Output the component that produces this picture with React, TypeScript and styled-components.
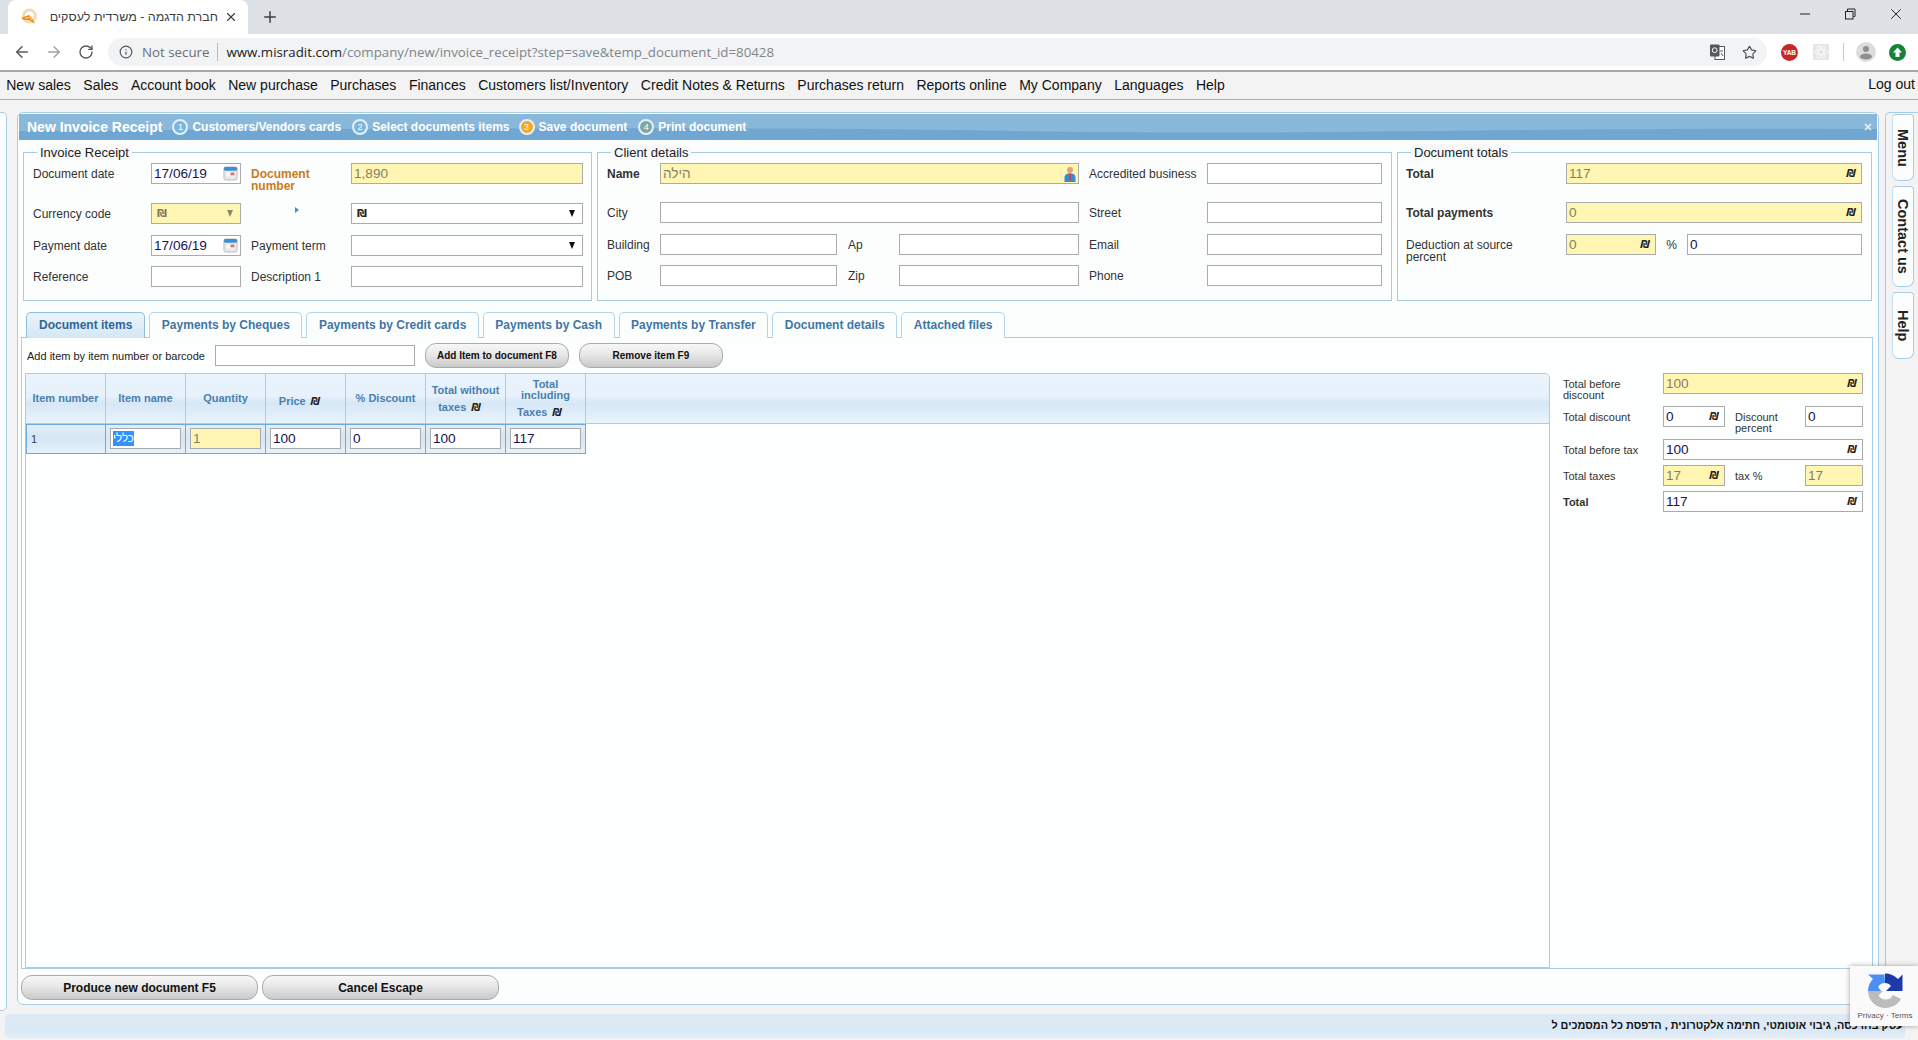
import { ReactNode } from 'react'
import { ArrowLeft, ArrowRight, Info, Minus, Plus, RotateCw, Star, X } from 'lucide-react'
import styled, { createGlobalStyle } from 'styled-components'

const GlobalStyle = createGlobalStyle`
  html, body {
    margin: 0;
    padding: 0;
    width: 1918px;
    height: 1040px;
    overflow: hidden;
    background: #f3f3f3;
    font-family: "Liberation Sans", Arial, sans-serif;
  }
  * {
    box-sizing: border-box;
  }
`

const Page = styled.div`
  position: relative;
  display: flex;
  flex-direction: column;
  width: 1918px;
  height: 1040px;
  overflow: hidden;
`

/* browser chrome */

const TabStrip = styled.div`
  display: flex;
  align-items: flex-end;
  height: 34px;
  padding-left: 8px;
  background: #dee1e6;
`

const BrowserTab = styled.div`
  display: flex;
  align-items: center;
  width: 240px;
  height: 34px;
  padding: 0 10px 0 12px;
  background: #fff;
  border-radius: 8px 8px 0 0;
`

const TabTitle = styled.span`
  flex: 1;
  margin-left: 8px;
  direction: rtl;
  white-space: nowrap;
  font-size: 12.5px;
  color: #3c4043;
`

const NewTab = styled.div`
  display: flex;
  margin-left: 13px;
  align-self: center;
  color: #3c4043;
`

const WindowButtons = styled.div`
  display: flex;
  align-items: center;
  gap: 30px;
  align-self: flex-start;
  height: 28px;
  margin-left: auto;
  padding-right: 13px;
  color: #222;
`

const Toolbar = styled.div`
  display: flex;
  align-items: center;
  height: 36px;
  padding-left: 13px;
  background: #fff;
`

const NavButton = styled.div<{ $faded?: boolean }>`
  display: flex;
  justify-content: center;
  width: 18px;
  margin-right: 14px;
  color: ${({ $faded }) => ($faded ? '#a0a3a8' : '#55585c')};
`

const AddressBar = styled.div`
  display: flex;
  align-items: center;
  flex: none;
  width: 1659px;
  height: 28px;
  margin-left: -1px;
  padding: 0 10px 0 11px;
  border-radius: 14px;
  background: #f1f3f4;
  font-family: "Open Sans", sans-serif;
  font-size: 13.3px;
  color: #80868b;
`

const NotSecure = styled.span`
  margin-left: 9px;
  padding-right: 8px;
  border-right: 1px solid #b8bcc0;
  line-height: 18px;
  color: #6b6f74;
`

const Url = styled.span`
  margin-left: 8px;
  b {
    font-weight: 400;
    color: #202124;
  }
`

const AddressIcons = styled.div`
  display: flex;
  align-items: center;
  gap: 17px;
  margin-left: auto;
  color: #55585c;
`

const ExtensionRow = styled.div`
  display: flex;
  align-items: center;
  flex: none;
  margin-left: 12px;
`

const ExtensionSlot = styled.div<{ $width: number }>`
  display: flex;
  justify-content: center;
  width: ${({ $width }) => $width}px;
`

const ExtensionDivider = styled.div`
  width: 1px;
  height: 18px;
  margin-right: 12px;
  background: #c8cacd;
`

/* site menu */

const MenuBar = styled.nav`
  display: flex;
  align-items: center;
  height: 30px;
  padding: 0 3px 2px 0;
  border-top: 2px solid #a8a8a8;
  border-bottom: 1px solid #ababab;
  background: #f3f3f3;
  font-size: 14px;
  color: #111;
`

const MenuItem = styled.a<{ $end?: boolean }>`
  padding: 0 6.25px;
  ${({ $end }) => $end && 'margin: 0 0 2px auto; padding: 0;'}
`

/* workspace */

const Workspace = styled.div`
  display: flex;
  align-items: flex-start;
  flex: 1;
  padding-top: 12px;
`

const LeftSliver = styled.div`
  width: 7px;
  height: 899px;
  border: 1px solid #a9cde6;
  border-left: 0;
  border-radius: 0 5px 5px 0;
  background: #fcfdfe;
`

const MainPanel = styled.main`
  display: flex;
  flex-direction: column;
  width: 1862px;
  height: 893px;
  margin-left: 10px;
  padding: 1px;
  border: 1px solid #a9cde6;
  border-radius: 6px;
  background: #fcfefe;
`

const TitleBar = styled.header`
  position: relative;
  display: flex;
  align-items: center;
  flex: none;
  height: 26px;
  padding: 0 4px 0 8px;
  overflow: hidden;
  background: #6fa6d2;
  color: #fff;
`

const TitleWave = styled.svg`
  position: absolute;
  inset: 0;
  width: 100%;
  height: 100%;
`

const TitleText = styled.h1`
  position: relative;
  margin: 0 10px 0 0;
  font-size: 14px;
  font-weight: 700;
  white-space: nowrap;
`

const Step = styled.div<{ $after: number }>`
  position: relative;
  display: flex;
  align-items: center;
  gap: 4px;
  margin-right: ${({ $after }) => $after}px;
  font-size: 12px;
  font-weight: 700;
  white-space: nowrap;
`

const StepDot = styled.span<{ $state: 'open' | 'current' | 'next' }>`
  display: flex;
  align-items: center;
  justify-content: center;
  width: 16px;
  height: 16px;
  border: 2px solid #e4f0f7;
  border-radius: 50%;
  font-size: 9px;
  font-weight: 400;
  color: #fff;
  background: ${({ $state }) =>
    $state === 'current' ? '#f5a623' : $state === 'next' ? '#7fa8a0' : '#7db4dd'};
`

const TitleClose = styled.span`
  position: relative;
  display: flex;
  margin-left: auto;
  color: #e8f2f9;
`

const SectionRow = styled.div`
  display: grid;
  grid-template-columns: 569px 795px 475px;
  gap: 5px;
  margin: 4px 0 0 4px;
`

const Section = styled.fieldset`
  height: 157px;
  margin: 0;
  padding: 0;
  border: 1px solid #a5cbe6;
  min-width: 0;
`

const SectionLegend = styled.legend`
  height: 16px;
  margin-left: 13px;
  padding: 0 3px;
  line-height: 18px;
  border-radius: 6px;
  background: #f8f9fa;
  font-size: 13px;
  color: #222;
`

const FormGrid = styled.div<{ $columns: string; $rows: string; $inset?: number }>`
  display: grid;
  grid-template-columns: ${({ $columns }) => $columns};
  grid-template-rows: ${({ $rows }) => $rows};
  padding: 3px 0 0 ${({ $inset }) => $inset ?? 9}px;
`

const Label = styled.label<{ $bold?: boolean; $accent?: boolean; $inset?: number; $maxWidth?: number }>`
  padding-top: 5px;
  padding-left: ${({ $inset }) => $inset ?? 0}px;
  max-width: ${({ $maxWidth }) => ($maxWidth ? `${$maxWidth}px` : 'none')};
  font-size: 12px;
  line-height: 12px;
  font-weight: ${({ $bold, $accent }) => ($bold || $accent ? 700 : 400)};
  color: ${({ $accent }) => ($accent ? '#cc7a20' : '#333')};
`

const Field = styled.div<{ $yellow?: boolean; $span?: number; $center?: boolean }>`
  display: flex;
  align-items: center;
  height: 21px;
  padding: 0 5px 0 2px;
  border: 1px solid #ababab;
  background: ${({ $yellow }) => ($yellow ? '#fff6b4' : '#fff')};
  color: ${({ $yellow }) => ($yellow ? '#857f68' : '#14145a')};
  ${({ $span }) => $span && `grid-column: span ${$span};`}
`

const FieldInput = styled.input`
  flex: 1;
  min-width: 0;
  padding: 0;
  border: 0;
  outline: 0;
  background: transparent;
  font-family: "Liberation Sans", Arial, sans-serif;
  font-size: 13.6px;
  color: inherit;
`

const FieldIcon = styled.span`
  display: flex;
  flex: none;
  margin-right: -3px;
`

const Shekel = styled.span<{ $plain?: boolean; $muted?: boolean }>`
  flex: none;
  font-family: "DejaVu Sans", sans-serif;
  font-size: 11px;
  font-weight: 700;
  font-style: ${({ $plain }) => ($plain ? 'normal' : 'italic')};
  margin-left: ${({ $plain }) => ($plain ? '3px' : '0')};
  color: ${({ $muted }) => ($muted ? '#7d7a68' : '#222')};
`

const HeadShekel = styled(Shekel)`
  margin: 0 12px 0 2px;
`

const Caret = styled.span<{ $muted?: boolean }>`
  flex: none;
  width: 0;
  height: 0;
  margin: 0 2px 0 auto;
  border-left: 3.5px solid transparent;
  border-right: 3.5px solid transparent;
  border-top: 7px solid ${({ $muted }) => ($muted ? '#8a8470' : '#111')};
`

const Pointer = styled.span`
  justify-self: center;
  align-self: start;
  width: 0;
  height: 0;
  margin: 4px 0 0 -8px;
  border-top: 3.5px solid transparent;
  border-bottom: 3.5px solid transparent;
  border-left: 4px solid #3f8fd6;
`

const PercentSign = styled.span`
  padding-top: 5px;
  text-align: center;
  font-size: 12px;
  line-height: 12px;
  color: #333;
`

/* tabs */

const TabRow = styled.div`
  display: flex;
  gap: 4px;
  height: 26px;
  margin: 11px 0 -1px 7px;
`

const PageTab = styled.div<{ $active?: boolean }>`
  position: relative;
  display: flex;
  align-items: center;
  padding: 0 11.5px 2px;
  border: 1px solid #b5d3ea;
  border-bottom: 0;
  border-radius: 5px 5px 0 0;
  font-size: 12px;
  font-weight: 700;
  white-space: nowrap;
  color: ${({ $active }) => ($active ? '#2f6796' : '#3f76a5')};
  background: ${({ $active }) => ($active ? 'linear-gradient(#eaf4fc, #d4e6f5)' : '#fcfefe')};
  ${({ $active }) => $active && 'border-color: #8fbde0; z-index: 1; padding: 0 12px 2px;'}
`

const TabPanel = styled.section`
  display: flex;
  flex: none;
  height: 632px;
  margin: 0 4px 0 2px;
  border: 1px solid #a9cde6;
  background: #fdfefe;
`

const ItemsColumn = styled.div`
  display: flex;
  flex-direction: column;
  width: 1528px;
  padding: 5px 0 0 3px;
`

const AddRow = styled.div`
  display: flex;
  align-items: center;
  height: 25px;
  padding-left: 2px;
  font-size: 11px;
  color: #222;
`

const AddInput = styled(Field)`
  width: 200px;
  margin: 0 10px;
`

const SoftButton = styled.button<{ $width: number; $height: number; $size: number }>`
  width: ${({ $width }) => $width}px;
  height: ${({ $height }) => $height}px;
  padding: 0;
  border: 1px solid #ababab;
  border-radius: 11px;
  background: linear-gradient(#f7f7f7, #e8e8e8 45%, #c9c9c9);
  font-family: "Liberation Sans", Arial, sans-serif;
  font-size: ${({ $size }) => $size}px;
  font-weight: 700;
  color: #111;
`

const AddButton = styled(SoftButton)`
  margin-right: 10px;
`

const GridBox = styled.div`
  flex: 1;
  margin-top: 5px;
  border: 1px solid #a9cde6;
  border-radius: 0 5px 0 0;
  background: #fdfefe;
`

const GridHead = styled.div`
  display: flex;
  height: 50px;
  border-bottom: 1px solid #a9cde6;
  border-radius: 0 5px 0 0;
  background: linear-gradient(#eaf4fc, #e6f1fb 45%, #d6e7f6 60%, #eaf4fc);
`

const HeadCell = styled.div<{ $drop?: boolean }>`
  display: flex;
  flex-direction: column;
  align-items: center;
  justify-content: center;
  width: 80px;
  padding-top: ${({ $drop }) => ($drop ? '5px' : '0')};
  border-right: 1px solid #a9cde6;
  font-size: 11px;
  font-weight: 700;
  line-height: 11px;
  text-align: center;
  color: #4a7fb0;
  span + span {
    margin-top: 6px;
  }
`

const GridRow = styled.div`
  display: flex;
  width: 560px;
  height: 30px;
  border: 1px solid #6eaade;
  background: linear-gradient(#e2eff9, #d5e6f4 45%, #e6f1fa);
`

const RowCell = styled.div`
  display: flex;
  align-items: center;
  width: 80px;
  padding: 0 4px 1px;
  border-right: 1px solid #6eaade;
  font-size: 11px;
  color: #444;
  &:last-child {
    border-right: 0;
  }
`

const CellField = styled(Field)`
  width: 71px;
`

const Selected = styled.span`
  background: #3390ff;
  font-size: 11.5px;
  line-height: 15px;
  color: #fff;
`

const Summary = styled.div`
  display: grid;
  grid-template-columns: 100px 62px 80px 58px;
  grid-template-rows: 33px 33px 26px 26px 21px;
  margin: 35px 0 0 13px;
`

const SummaryLabel = styled.label<{ $bold?: boolean; $inset?: number }>`
  padding-top: 6px;
  padding-left: ${({ $inset }) => $inset ?? 0}px;
  font-size: 11px;
  line-height: 11px;
  font-weight: ${({ $bold }) => ($bold ? 700 : 400)};
  color: #333;
`

const ActionRow = styled.div`
  display: flex;
  gap: 4px;
  margin: 6px 0 0 2px;
`

/* side rail */

const SideRail = styled.aside`
  display: flex;
  flex-direction: column;
  gap: 5px;
  width: 33px;
  height: 899px;
  margin-left: 6px;
  padding: 1px 0 0 6px;
  border-left: 1px solid #a9cde6;
  border-top: 1px solid #a9cde6;
  border-radius: 5px 0 0 0;
`

const SideTab = styled.div<{ $height: number }>`
  display: flex;
  align-items: center;
  justify-content: center;
  width: 22px;
  height: ${({ $height }) => $height}px;
  border: 1px solid #a9cde6;
  border-left-color: #c8dff0;
  border-radius: 4px 4px 7px 7px;
  background: #fcfefe;
  writing-mode: vertical-rl;
  font-size: 14.5px;
  font-weight: 700;
  color: #222;
`

/* footer */

const Ticker = styled.footer`
  display: flex;
  align-items: center;
  justify-content: flex-start;
  height: 24px;
  margin: 0 13px 2px 5px;
  padding: 0 2px 2px 0;
  overflow: hidden;
  border-radius: 4px;
  background: linear-gradient(#dde9f5 50%, #d8e8f6 50%, #e2edf8);
  font-size: 10.85px;
  font-weight: 700;
  white-space: nowrap;
  direction: rtl;
  color: #111;
`

const CaptchaBadge = styled.div`
  position: absolute;
  right: 0;
  bottom: 14px;
  display: flex;
  flex-direction: column;
  align-items: center;
  width: 68px;
  height: 60px;
  padding: 7px 0 0 2px;
  background: #fafafa;
  box-shadow: 0 0 5px rgba(0, 0, 0, 0.35);
`

const CaptchaLinks = styled.span`
  margin-top: 3px;
  font-size: 8px;
  color: #555;
  white-space: nowrap;
`

function Favicon() {
  return (
    <svg width="18" height="18" viewBox="0 0 18 18">
      <circle cx="9.5" cy="8" r="6" fill="none" stroke="#f0dcae" strokeWidth="3" />
      <path d="M1 10 L9 7 L12 10 L15 16 L9 12 L4 12 Z" fill="#f08a1e" />
      <path d="M5 10.5 L10 9 L12 12" fill="none" stroke="#fbd27a" strokeWidth="1" />
    </svg>
  )
}

function TranslateIcon() {
  return (
    <svg width="15" height="16" viewBox="0 0 15 16">
      <rect x="5" y="2.5" width="9.5" height="13" fill="#fff" stroke="#55585c" />
      <rect x="0" y="0.5" width="9.5" height="12" rx="1" fill="#55585c" />
      <circle cx="4.7" cy="6.2" r="2.4" fill="none" stroke="#fff" />
      <path d="M10 7 h3 M11 9 l2 3" stroke="#55585c" fill="none" />
    </svg>
  )
}

function YabBadge() {
  return (
    <svg width="17" height="17" viewBox="0 0 17 17">
      <circle cx="8.5" cy="8.5" r="8.5" fill="#c62828" />
      <text x="8.5" y="11" textAnchor="middle" fontSize="6.5" fontWeight="700" fill="#fff" fontFamily="Liberation Sans">
        YAB
      </text>
    </svg>
  )
}

function AtomTile() {
  return (
    <svg width="16" height="16" viewBox="0 0 16 16">
      <rect width="16" height="16" fill="#e4e5e6" />
      <g fill="none" stroke="#f8f8f8" strokeWidth="1">
        <ellipse cx="8" cy="8" rx="6.5" ry="2.6" />
        <ellipse cx="8" cy="8" rx="6.5" ry="2.6" transform="rotate(60 8 8)" />
        <ellipse cx="8" cy="8" rx="6.5" ry="2.6" transform="rotate(120 8 8)" />
      </g>
    </svg>
  )
}

function Avatar() {
  return (
    <svg width="20" height="20" viewBox="0 0 20 20">
      <circle cx="10" cy="10" r="10" fill="#dcdcdc" />
      <circle cx="10" cy="7" r="3" fill="#8f8f8f" />
      <ellipse cx="10" cy="14.5" rx="6" ry="3" fill="#8f8f8f" />
    </svg>
  )
}

function UpdateBadge() {
  return (
    <svg width="17" height="17" viewBox="0 0 17 17">
      <circle cx="8.5" cy="8.5" r="8.5" fill="#188038" />
      <path d="M8.5 3.5 L13 8.5 H10.5 V13 H6.5 V8.5 H4 Z" fill="#fff" />
    </svg>
  )
}

function CalendarIcon() {
  return (
    <FieldIcon>
      <svg width="15" height="15" viewBox="0 0 16 16">
        <rect x="1" y="1" width="14" height="14" rx="2" fill="#e6e8ea" stroke="#b5bcc4" />
        <rect x="1" y="1" width="14" height="4" rx="1.5" fill="#3d8fd8" />
        <rect x="4" y="7" width="8" height="4" fill="#fff" />
        <rect x="8" y="7" width="4" height="3" fill="#e76a6a" />
      </svg>
    </FieldIcon>
  )
}

function PersonIcon() {
  return (
    <FieldIcon>
      <svg width="12" height="16" viewBox="0 0 12 16">
        <circle cx="6" cy="4" r="3" fill="#dfa27a" />
        <path d="M0.5 16 V11 Q1 8 4 7.5 H8 Q11 8 11.5 11 V16 Z" fill="#2f8ed6" />
        <path d="M5 7.5 H7 L7 14 L6 15 L5 14 Z" fill="#d8403f" />
      </svg>
    </FieldIcon>
  )
}

function CaptchaLogo() {
  return (
    <svg width="36" height="35" viewBox="0 0 36 35">
      <path d="M1 18 H16 L11.5 22.5 C13 25 15.5 26.5 18.5 26.5 C22 26.5 24.5 25 26 22 L34 26 C31 31.5 25 35 18.5 35 C9 35 1 27.5 1 18 Z" fill="#bcbcbc" />
      <path d="M1 18 C1 13 3 9 6 6 L1 1.5 H17.5 L18 10 C15 10 12.5 11.5 11 14 L14 18 Z" fill="#4a8ff5" />
      <path d="M18 0.5 C24 0.5 28 3 31 6 L35.5 1.5 V18 H19 L24 13 C22.5 11 20.5 10 18 10 Z" fill="#1c3aa9" />
    </svg>
  )
}

function Input({ value, yellow, span, suffix }: { value?: string; yellow?: boolean; span?: number; suffix?: ReactNode }) {
  return (
    <Field $yellow={yellow} $span={span}>
      <FieldInput readOnly value={value ?? ''} />
      {suffix}
    </Field>
  )
}

const STEPS: { label: string; state: 'open' | 'current' | 'next'; after: number }[] = [
  { label: 'Customers/Vendors cards', state: 'open', after: 11 },
  { label: 'Select documents items', state: 'open', after: 9 },
  { label: 'Save document', state: 'current', after: 11 },
  { label: 'Print document', state: 'next', after: 0 },
]

const MENU = [
  'New sales',
  'Sales',
  'Account book',
  'New purchase',
  'Purchases',
  'Finances',
  'Customers list/Inventory',
  'Credit Notes & Returns',
  'Purchases return',
  'Reports online',
  'My Company',
  'Languages',
  'Help',
]

const TABS = [
  'Document items',
  'Payments by Cheques',
  'Payments by Credit cards',
  'Payments by Cash',
  'Payments by Transfer',
  'Document details',
  'Attached files',
]

export default function App() {
  return (
    <Page>
      <GlobalStyle />
      <TabStrip>
        <BrowserTab>
          <Favicon />
          <TabTitle>חברת הדגמה - משרדית לעסקים</TabTitle>
          <X size={14} color="#3c4043" style={{ marginLeft: 6 }} />
        </BrowserTab>
        <NewTab>
          <Plus size={18} />
        </NewTab>
        <WindowButtons>
          <Minus size={16} strokeWidth={1.5} />
          <svg width="14" height="14" viewBox="0 0 14 14" fill="none" stroke="#222">
            <rect x="2.5" y="4.5" width="7.5" height="7.5" />
            <path d="M4.5 4 V2 H12 V9.5 H10.5" />
          </svg>
          <X size={18} strokeWidth={1.25} />
        </WindowButtons>
      </TabStrip>

      <Toolbar>
        <NavButton>
          <ArrowLeft size={18} />
        </NavButton>
        <NavButton $faded>
          <ArrowRight size={18} />
        </NavButton>
        <NavButton>
          <RotateCw size={16} />
        </NavButton>
        <AddressBar>
          <Info size={14} color="#55585c" />
          <NotSecure>Not secure</NotSecure>
          <Url>
            <b>www.misradit.com</b>/company/new/invoice_receipt?step=save&temp_document_id=80428
          </Url>
          <AddressIcons>
            <TranslateIcon />
            <Star size={15} />
          </AddressIcons>
        </AddressBar>
        <ExtensionRow>
          <ExtensionSlot $width={20}>
            <YabBadge />
          </ExtensionSlot>
          <ExtensionSlot $width={44}>
            <AtomTile />
          </ExtensionSlot>
          <ExtensionDivider />
          <ExtensionSlot $width={20}>
            <Avatar />
          </ExtensionSlot>
          <ExtensionSlot $width={42}>
            <UpdateBadge />
          </ExtensionSlot>
        </ExtensionRow>
      </Toolbar>

      <MenuBar>
        {MENU.map(item => (
          <MenuItem key={item}>{item}</MenuItem>
        ))}
        <MenuItem $end>Log out</MenuItem>
      </MenuBar>

      <Workspace>
        <LeftSliver />
        <MainPanel>
          <TitleBar>
            <TitleWave viewBox="0 0 1860 26" preserveAspectRatio="none">
              <path d="M0 0 H1860 V15 C1500 13 1300 22 1000 17 C700 12 300 15 0 17 Z" fill="#89b8db" />
            </TitleWave>
            <TitleText>New Invoice Receipt</TitleText>
            {STEPS.map((step, i) => (
              <Step key={step.label} $after={step.after}>
                <StepDot $state={step.state}>{i + 1}</StepDot>
                {step.label}
              </Step>
            ))}
            <TitleClose>
              <X size={10} strokeWidth={4} />
            </TitleClose>
          </TitleBar>

          <SectionRow>
            <Section>
              <SectionLegend>Invoice Receipt</SectionLegend>
              <FormGrid $columns="118px 90px 10px 100px 232px" $rows="40px 32px 31px 21px">
                <Label>Document date</Label>
                <Input value="17/06/19" suffix={<CalendarIcon />} />
                <span />
                <Label $accent>Document number</Label>
                <Input value="1,890" yellow />

                <Label>Currency code</Label>
                <Field $yellow>
                  <Shekel $plain $muted>₪</Shekel>
                  <Caret $muted />
                </Field>
                <span />
                <Pointer />
                <Field>
                  <Shekel $plain>₪</Shekel>
                  <Caret />
                </Field>

                <Label>Payment date</Label>
                <Input value="17/06/19" suffix={<CalendarIcon />} />
                <span />
                <Label>Payment term</Label>
                <Field>
                  <Caret />
                </Field>

                <Label>Reference</Label>
                <Input />
                <span />
                <Label>Description 1</Label>
                <Input />
              </FormGrid>
            </Section>

            <Section>
              <SectionLegend>Client details</SectionLegend>
              <FormGrid $columns="53px 177px 62px 180px 128px 175px" $rows="39px 32px 31px 21px">
                <Label $bold>Name</Label>
                <Field $yellow $span={3}>
                  <FieldInput readOnly value="הילה" />
                  <PersonIcon />
                </Field>
                <Label $inset={10}>Accredited business</Label>
                <Input />

                <Label>City</Label>
                <Input span={3} />
                <Label $inset={10}>Street</Label>
                <Input />

                <Label>Building</Label>
                <Input />
                <Label $inset={11}>Ap</Label>
                <Input />
                <Label $inset={10}>Email</Label>
                <Input />

                <Label>POB</Label>
                <Input />
                <Label $inset={11}>Zip</Label>
                <Input />
                <Label $inset={10}>Phone</Label>
                <Input />
              </FormGrid>
            </Section>

            <Section>
              <SectionLegend>Document totals</SectionLegend>
              <FormGrid $columns="160px 90px 31px 175px" $rows="39px 32px 31px" $inset={8}>
                <Label $bold>Total</Label>
                <Input value="117" yellow span={3} suffix={<Shekel>₪</Shekel>} />

                <Label $bold>Total payments</Label>
                <Input value="0" yellow span={3} suffix={<Shekel>₪</Shekel>} />

                <Label $maxWidth={125}>Deduction at source percent</Label>
                <Input value="0" yellow suffix={<Shekel>₪</Shekel>} />
                <PercentSign>%</PercentSign>
                <Input value="0" />
              </FormGrid>
            </Section>
          </SectionRow>

          <TabRow>
            {TABS.map((tab, i) => (
              <PageTab key={tab} $active={i === 0}>
                {tab}
              </PageTab>
            ))}
          </TabRow>

          <TabPanel>
            <ItemsColumn>
              <AddRow>
                Add item by item number or barcode
                <AddInput />
                <AddButton $width={144} $height={25} $size={10}>
                  Add Item to document F8
                </AddButton>
                <SoftButton $width={144} $height={25} $size={10}>
                  Remove item F9
                </SoftButton>
              </AddRow>
              <GridBox>
                <GridHead>
                  <HeadCell>Item number</HeadCell>
                  <HeadCell>Item name</HeadCell>
                  <HeadCell>Quantity</HeadCell>
                  <HeadCell $drop>
                    <span>
                      Price <HeadShekel>₪</HeadShekel>
                    </span>
                  </HeadCell>
                  <HeadCell>% Discount</HeadCell>
                  <HeadCell>
                    <span>Total without</span>
                    <span>
                      taxes <HeadShekel>₪</HeadShekel>
                    </span>
                  </HeadCell>
                  <HeadCell>
                    <span>
                      Total
                      <br />
                      including
                    </span>
                    <span>
                      Taxes <HeadShekel>₪</HeadShekel>
                    </span>
                  </HeadCell>
                </GridHead>
                <GridRow>
                  <RowCell>1</RowCell>
                  <RowCell>
                    <CellField>
                      <Selected>כללי</Selected>
                    </CellField>
                  </RowCell>
                  <RowCell>
                    <CellField $yellow>
                      <FieldInput readOnly value="1" />
                    </CellField>
                  </RowCell>
                  <RowCell>
                    <CellField>
                      <FieldInput readOnly value="100" />
                    </CellField>
                  </RowCell>
                  <RowCell>
                    <CellField>
                      <FieldInput readOnly value="0" />
                    </CellField>
                  </RowCell>
                  <RowCell>
                    <CellField>
                      <FieldInput readOnly value="100" />
                    </CellField>
                  </RowCell>
                  <RowCell>
                    <CellField>
                      <FieldInput readOnly value="117" />
                    </CellField>
                  </RowCell>
                </GridRow>
              </GridBox>
            </ItemsColumn>

            <Summary>
              <SummaryLabel>
                Total before
                <br />
                discount
              </SummaryLabel>
              <Input value="100" yellow span={3} suffix={<Shekel>₪</Shekel>} />

              <SummaryLabel>Total discount</SummaryLabel>
              <Input value="0" suffix={<Shekel>₪</Shekel>} />
              <SummaryLabel $inset={10}>
                Discount
                <br />
                percent
              </SummaryLabel>
              <Input value="0" />

              <SummaryLabel>Total before tax</SummaryLabel>
              <Input value="100" span={3} suffix={<Shekel>₪</Shekel>} />

              <SummaryLabel>Total taxes</SummaryLabel>
              <Input value="17" yellow suffix={<Shekel>₪</Shekel>} />
              <SummaryLabel $inset={10}>tax %</SummaryLabel>
              <Input value="17" yellow />

              <SummaryLabel $bold>Total</SummaryLabel>
              <Input value="117" span={3} suffix={<Shekel>₪</Shekel>} />
            </Summary>
          </TabPanel>

          <ActionRow>
            <SoftButton $width={237} $height={25} $size={12}>
              Produce new document F5
            </SoftButton>
            <SoftButton $width={237} $height={25} $size={12}>
              Cancel Escape
            </SoftButton>
          </ActionRow>
        </MainPanel>

        <SideRail>
          <SideTab $height={67}>Menu</SideTab>
          <SideTab $height={101}>Contact us</SideTab>
          <SideTab $height={67}>Help</SideTab>
        </SideRail>
      </Workspace>

      <Ticker>עסק בחו כסה, גיבוי אוטומטי, חתימה אלקטרונית , הדפסת כל המסמכים ל</Ticker>

      <CaptchaBadge>
        <CaptchaLogo />
        <CaptchaLinks>Privacy · Terms</CaptchaLinks>
      </CaptchaBadge>
    </Page>
  )
}
